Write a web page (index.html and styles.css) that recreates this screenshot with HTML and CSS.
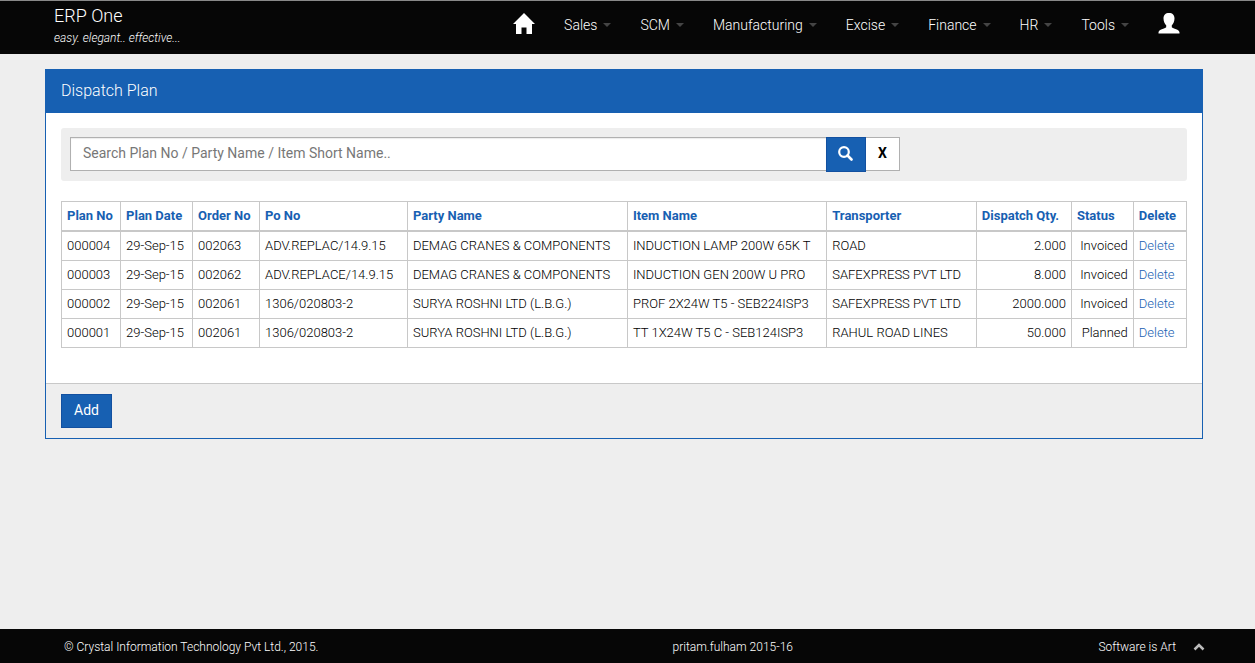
FILE: index.html
```html
<!DOCTYPE html>
<html lang="en">
<head>
<meta charset="utf-8">
<title>ERP One - Dispatch Plan</title>
<link rel="stylesheet" href="styles.css">
</head>
<body>
<header class="topbar">
  <div class="brand">
    <a class="brand-name" href="#">ERP One</a>
    <span class="brand-tag">easy. elegant.. effective...</span>
  </div>
  <nav class="menu" aria-label="Main">
    <a class="menu-icon" href="#" aria-label="Home"><svg width="22" height="21" viewBox="0 0 22 21"><path fill="#fff" d="M11 0 15 4 22 11H19V21H13.500V14.500H8.500V21H3V11H0z"/></svg></a>
    <a class="menu-item" href="#">Sales<span class="caret"></span></a>
    <a class="menu-item" href="#">SCM<span class="caret"></span></a>
    <a class="menu-item" href="#">Manufacturing<span class="caret"></span></a>
    <a class="menu-item" href="#">Excise<span class="caret"></span></a>
    <a class="menu-item" href="#">Finance<span class="caret"></span></a>
    <a class="menu-item" href="#">HR<span class="caret"></span></a>
    <a class="menu-item" href="#">Tools<span class="caret"></span></a>
    <a class="menu-icon" href="#" aria-label="User"><svg width="22" height="21" viewBox="0 0 22 21"><path fill="#fff" d="M11 0C14.500 0 16.500 2 16.500 5.500C16.500 9 15 11 13.800 12.300V14.300C15 15.600 21.500 16.500 21.500 19.500V20.500H.500V19.500C.500 16.500 7 15.600 8.200 14.300V12.300C7 11 5.500 9 5.500 5.500C5.500 2 7.500 0 11 0z"/></svg></a>
  </nav>
</header>
<main class="content">
  <section class="panel">
    <h1 class="panel-title">Dispatch Plan</h1>
    <div class="panel-body">
      <form class="well">
        <div class="search">
          <input class="search-input" type="text" aria-label="Search" placeholder="Search Plan No / Party Name / Item Short Name..">
          <button class="search-button" type="button" aria-label="Search"><svg width="15" height="15" viewBox="0 0 15 15"><circle cx="6" cy="6" r="4.800" fill="none" stroke="#fff" stroke-width="2.200"/><path d="M9.500 9.500 13.500 13.500" stroke="#fff" stroke-width="2.600" stroke-linecap="round"/></svg></button>
          <button class="clear-button" type="button">X</button>
        </div>
      </form>
      <table class="plans">
        <colgroup><col class="c-plan"><col class="c-date"><col class="c-order"><col class="c-po"><col class="c-party"><col class="c-item"><col class="c-trans"><col class="c-qty"><col class="c-status"><col class="c-del"></colgroup>
        <thead>
          <tr><th>Plan No</th><th>Plan Date</th><th>Order No</th><th>Po No</th><th>Party Name</th><th>Item Name</th><th>Transporter</th><th>Dispatch Qty.</th><th>Status</th><th>Delete</th></tr>
        </thead>
        <tbody>
          <tr><td>000004</td><td>29-Sep-15</td><td>002063</td><td>ADV.REPLAC/14.9.15</td><td>DEMAG CRANES &amp; COMPONENTS</td><td>INDUCTION LAMP 200W 65K T</td><td>ROAD</td><td class="num">2.000</td><td class="num">Invoiced</td><td><a href="#">Delete</a></td></tr>
          <tr><td>000003</td><td>29-Sep-15</td><td>002062</td><td>ADV.REPLACE/14.9.15</td><td>DEMAG CRANES &amp; COMPONENTS</td><td>INDUCTION GEN 200W U PRO</td><td>SAFEXPRESS PVT LTD</td><td class="num">8.000</td><td class="num">Invoiced</td><td><a href="#">Delete</a></td></tr>
          <tr><td>000002</td><td>29-Sep-15</td><td>002061</td><td>1306/020803-2</td><td>SURYA ROSHNI LTD (L.B.G.)</td><td>PROF 2X24W T5 - SEB224ISP3</td><td>SAFEXPRESS PVT LTD</td><td class="num">2000.000</td><td class="num">Invoiced</td><td><a href="#">Delete</a></td></tr>
          <tr><td>000001</td><td>29-Sep-15</td><td>002061</td><td>1306/020803-2</td><td>SURYA ROSHNI LTD (L.B.G.)</td><td>TT 1X24W T5 C - SEB124ISP3</td><td>RAHUL ROAD LINES</td><td class="num">50.000</td><td class="num">Planned</td><td><a href="#">Delete</a></td></tr>
        </tbody>
      </table>
    </div>
    <div class="panel-footer"><button class="add-button" type="button">Add</button></div>
  </section>
</main>
<footer class="bottombar">
  <span>© Crystal Information Technology Pvt Ltd., 2015.</span>
  <span>pritam.fulham 2015-16</span>
  <span class="motto">Software is Art <a class="to-top" href="#" aria-label="Back to top"><svg width="12" height="8" viewBox="0 0 12 8"><path d="M1.500 6.500 6 2 10.500 6.500" fill="none" stroke="#bbb" stroke-width="2.500"/></svg></a></span>
</footer>
</body>
</html>
```
FILE: styles.css
```css
* { box-sizing: border-box; }
body {
  margin: 0;
  min-height: 100vh;
  display: flex;
  flex-direction: column;
  background: #eee;
  color: #000;
  font: 300 13px/18px Roboto, "Liberation Sans", sans-serif;
}
a { text-decoration: none; }
button, input { font: inherit; margin: 0; border-radius: 0; }
svg { display: block; }

.topbar {
  display: flex;
  justify-content: space-between;
  height: 54px;
  padding: 0 75px 0 54px;
  background: #060606;
  border-top: 1px solid #888;
  color: #fff;
}
.brand { display: flex; flex-direction: column; padding-top: 4px; }
.brand-name { font-size: 18px; line-height: 22px; color: #fff; }
.brand-tag { font-size: 12px; line-height: 22px; font-style: italic; }
.menu { display: flex; align-items: center; gap: 29px; height: 48px; }
.menu-item {
  display: flex;
  align-items: center;
  gap: 6px;
  color: #fff;
  font-size: 14px;
  line-height: 20px;
}
.menu-icon { padding-bottom: 4px; }
.caret {
  border: 4px solid transparent;
  border-top-color: #444;
  border-bottom: 0;
}

.content { flex: 1; padding: 15px 52px 15px 45px; }
.panel { background: #fff; border: 1px solid #1760b2; }
.panel-title {
  margin: 0;
  padding: 10px 15px 11px;
  background: #1760b2;
  color: #fff;
  font-size: 16px;
  line-height: 22px;
  font-weight: 300;
}
.panel-body { padding: 15px 15px 35px; }
.well { margin-bottom: 20px; padding: 9px; background: #eee; border-radius: 3px; }
.search { display: flex; align-items: flex-start; width: 74.9%; }
.search-input {
  flex: 1;
  height: 34px;
  padding: 5px 12px 7px;
  border: 1px solid #b0b0b0;
  border-right: 0;
  background: #fff;
  box-shadow: inset 0 1px 1px rgba(0, 0, 0, .08);
  font-size: 14px;
  font-weight: 400;
}
.search-input::placeholder { color: #777; opacity: 1; }
.search-button {
  display: flex;
  align-items: center;
  justify-content: center;
  width: 40px;
  height: 35px;
  padding: 0 0 2px;
  background: #1760b2;
  border: 1px solid #1250a0;
}
.clear-button {
  width: 34px;
  height: 34px;
  padding: 0 0 2px;
  background: #fff;
  border: 1px solid #b0b0b0;
  border-left: 0;
  color: #000;
  font-size: 14px;
  font-weight: 700;
}

.plans { width: 100%; table-layout: fixed; border-collapse: collapse; }
.plans th, .plans td { padding: 5px; border: 1px solid #c8c8c8; text-align: left; white-space: nowrap; }
.plans th { border-bottom-width: 2px; color: #1760b2; font-weight: 700; }
.plans .num { text-align: right; }
.plans a { color: #1760b2; }
.c-plan { width: 5.25%; }
.c-date { width: 6.4%; }
.c-order { width: 5.95%; }
.c-po { width: 13.15%; }
.c-party { width: 19.55%; }
.c-item { width: 17.72%; }
.c-trans { width: 13.3%; }
.c-qty { width: 8.45%; }
.c-status { width: 5.5%; }
.c-del { width: 4.73%; }

.panel-footer { padding: 10px 15px; background: #eee; border-top: 1px solid #c8c8c8; }
.add-button {
  display: block;
  height: 34px;
  padding: 0 12px 2px;
  background: #1760b2;
  border: 1px solid #1250a0;
  color: #fff;
  font-size: 14px;
  font-weight: 400;
}

.bottombar {
  display: grid;
  grid-template-columns: 8fr 3fr 4fr;
  align-items: center;
  height: 34px;
  padding: 2px 50px 0 64px;
  background: #060606;
  color: #fff;
  font-size: 12px;
}
.motto { display: flex; align-items: center; justify-content: flex-end; gap: 17px; }
```
